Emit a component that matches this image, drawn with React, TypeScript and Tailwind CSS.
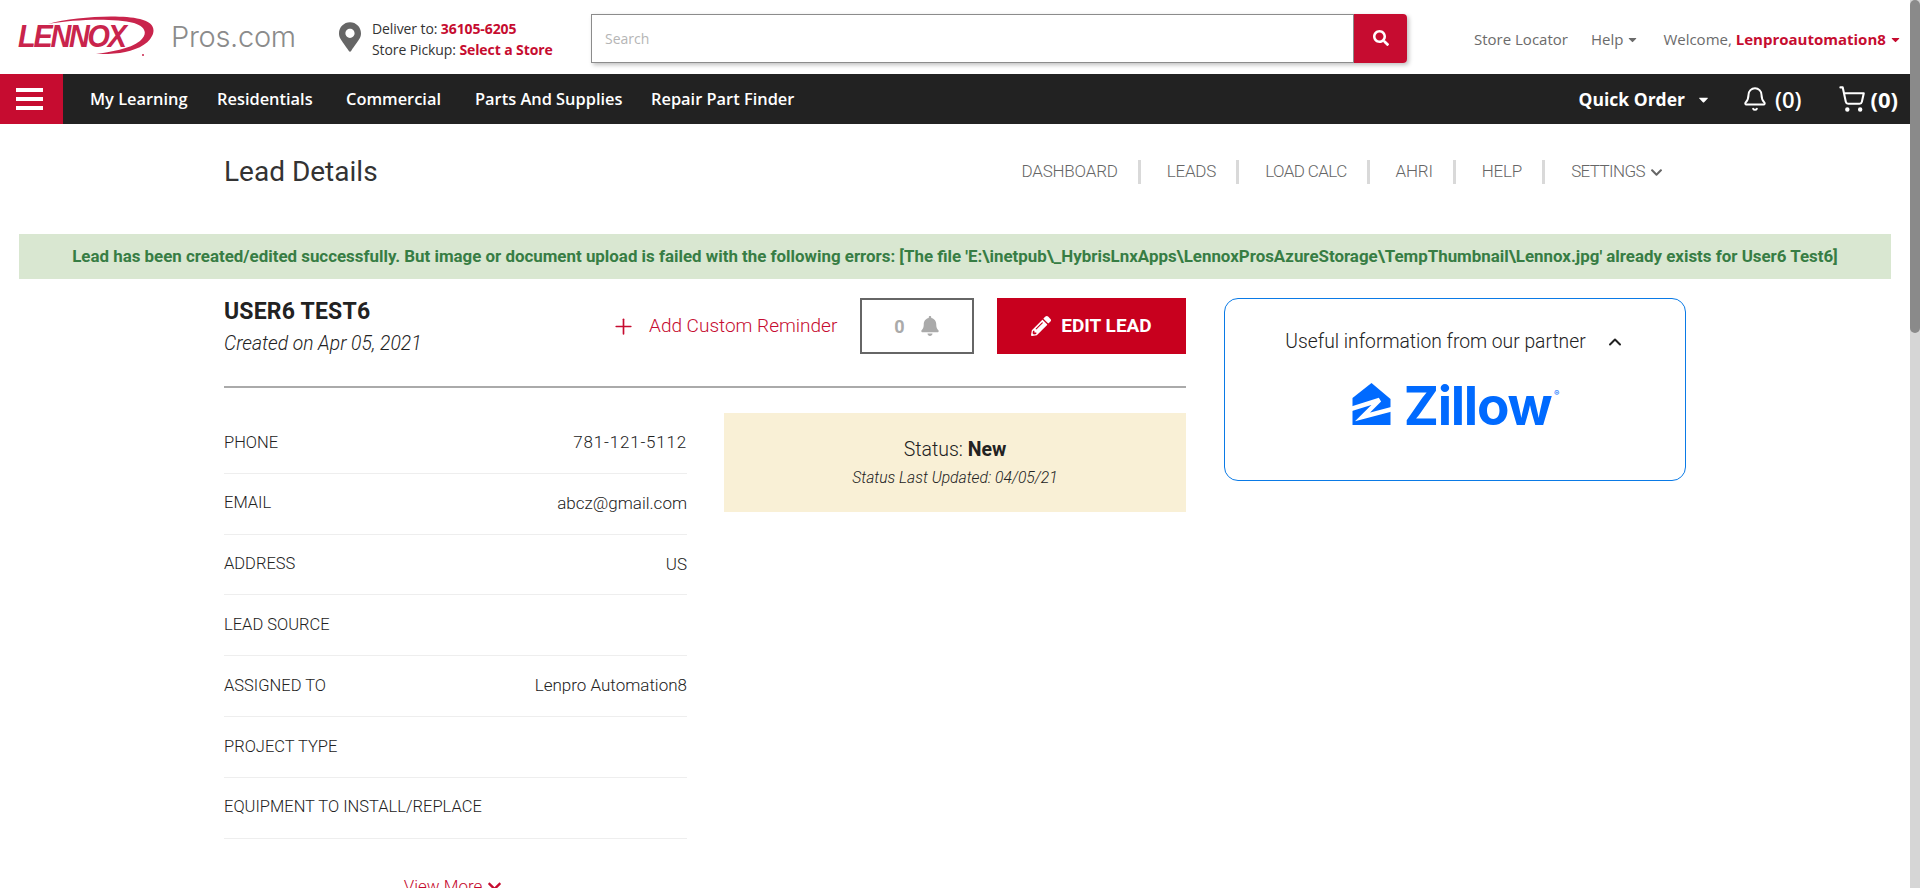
import { FaBell, FaChevronDown, FaMapMarkerAlt, FaPencilAlt, FaSearch, FaCaretDown } from "react-icons/fa";
import { Bell, ChevronUp, Plus, ShoppingCart } from "lucide-react";

const rows: [string, string][] = [
  ["PHONE", "781-121-5112"],
  ["EMAIL", "abcz@gmail.com"],
  ["ADDRESS", "US"],
  ["LEAD SOURCE", ""],
  ["ASSIGNED TO", "Lenpro Automation8"],
  ["PROJECT TYPE", ""],
  ["EQUIPMENT TO INSTALL/REPLACE", ""],
];

function LennoxLogo() {
  return (
    <div className="relative w-[143px] h-[42px] shrink-0">
      <svg viewBox="0 0 143 42" className="absolute inset-0 w-full h-full">
        <path d="M30 8 C55 1 100 -2 122 3 C134 6 138 12 134 20 C130 29 116 35 102 37 C94 38 86 38 78 38 C92 36 112 33 122 25 C130 18 128 11 116 7 C96 2 58 3 30 8 Z" fill="#c9244c" />
        <circle cx="125" cy="39" r="1" fill="#c9244c" />
      </svg>
      <span className="absolute left-0 top-[5px] font-['Liberation_Sans',sans-serif] font-bold italic text-[31px] leading-[32px] tracking-[-2.4px] text-[#c9244c] scale-x-[0.93] origin-left">LENNOX</span>
    </div>
  );
}

function ZillowLogo() {
  return (
    <div className="flex items-baseline gap-[13px] mr-[7px]">
      <svg viewBox="0 0 38 42" className="w-[39px] h-[42px] shrink-0">
        <path d="M19 0 L38 16 V42 H0 V15 Z" fill="#006AFF" />
        <path d="M-2 26 L27 17 L10 34 L40 26" fill="none" stroke="#ffffff" strokeWidth="4.5" strokeLinejoin="miter" />
      </svg>
      <span className="relative font-['Inter',sans-serif] font-bold text-[53px] leading-[42px] tracking-[-1.25px] text-[#006AFF]">
        Zillow
        <span className="absolute -right-[8px] top-[4px] text-[8px] leading-[8px] font-normal tracking-normal">®</span>
      </span>
    </div>
  );
}

function TopBar() {
  return (
    <div className="flex items-center h-[74px] pl-[18px] font-['Open_Sans',sans-serif]">
      <LennoxLogo />
      <span className="ml-[10px] w-[124px] font-['Inter',sans-serif] font-light text-[29px] tracking-[-0.3px] text-[#8b8b8b]">Pros.com</span>
      <FaMapMarkerAlt className="ml-[44px] text-[#666] w-[22px] h-[32px] shrink-0" />
      <div className="ml-[11px] w-[218px] mt-[4px] text-[14px] leading-[21px] text-[#333] tracking-[-0.1px]">
        <div>Deliver to: <span className="font-bold text-[#c60c30]">36105-6205</span></div>
        <div>Store Pickup: <span className="font-bold text-[#c60c30]">Select a Store</span></div>
      </div>
      <div className="flex mt-[2px] h-[49px] w-[816px] ml-[1px] shadow-[2px_2px_4px_rgba(0,0,0,0.25)] rounded-r-[4px]">
        <div className="flex-1 border border-[#8c8c8c] flex items-center pl-[13px] text-[14px] text-[#b5b5b5]">Search</div>
        <div className="w-[53px] bg-[#c60c30] rounded-r-[4px] flex items-center justify-center">
          <FaSearch className="text-white w-[16px] h-[16px]" />
        </div>
      </div>
      <div className="ml-[67px] flex items-center text-[15px] text-[#6b6b6b] pt-[5px] whitespace-nowrap">
        <span>Store Locator</span>
        <span className="ml-[23px] flex items-center gap-[3px]">Help <FaCaretDown className="w-[13px] h-[13px]" /></span>
        <span className="ml-[24px]">Welcome, <span className="font-bold text-[#c60c30]">Lenproautomation8</span></span>
        <FaCaretDown className="ml-[3px] w-[13px] h-[13px] text-[#c60c30]" />
      </div>
    </div>
  );
}

function NavBar() {
  return (
    <div className="flex items-center h-[50px] bg-[#222] text-white font-['Open_Sans',sans-serif] font-semibold text-[16.4px] whitespace-nowrap">
      <div className="w-[63px] h-full bg-[#c60c30] pr-[4px] flex flex-col items-center justify-center gap-[5px]">
        <span className="block w-[27px] h-[4px] bg-white" />
        <span className="block w-[27px] h-[4px] bg-white" />
        <span className="block w-[27px] h-[4px] bg-white" />
      </div>
      <span className="ml-[27px] w-[127px]">My Learning</span>
      <span className="w-[129px]">Residentials</span>
      <span className="w-[129px]">Commercial</span>
      <span className="w-[176px]">Parts And Supplies</span>
      <span>Repair Part Finder</span>
      <div className="flex-1" />
      <span className="text-[17.5px] font-bold">Quick Order</span>
      <FaCaretDown className="ml-[11px] w-[15px] h-[15px]" />
      <Bell className="ml-[31px] w-[26px] h-[26px]" strokeWidth={1.8} />
      <span className="ml-[7px] text-[22px] font-semibold">(0)</span>
      <ShoppingCart className="ml-[36px] w-[28px] h-[28px]" strokeWidth={1.8} />
      <span className="ml-[5px] mr-[12px] text-[22px] font-bold">(0)</span>
    </div>
  );
}

function SubNav() {
  const items = ["DASHBOARD", "LEADS", "LOAD CALC", "AHRI", "HELP"];
  return (
    <div className="flex items-center text-[17px] text-[#666] tracking-[-0.2px] whitespace-nowrap">
      {items.map((t) => (
        <div key={t} className="flex items-center">
          <span className={t === "LOAD CALC" ? "tracking-[-0.6px]" : "tracking-[-0.2px]"}>{t}</span>
          <span className="ml-[20px] mr-[26px] w-[3px] h-[24px] bg-[#d9d9d9]" />
        </div>
      ))}
      <span className="tracking-[-0.6px]">SETTINGS</span>
      <FaChevronDown className="ml-[5px] w-[13px] h-[13px]" />
    </div>
  );
}

function LeadInfo() {
  return (
    <div className="w-[962px]">
      <div className="flex items-start h-[90px] border-b-2 border-[#aaa]">
        <div className="w-[390px]">
          <div className="text-[23px] leading-[28px] font-bold text-[#222] tracking-[0.2px]">USER6 TEST6</div>
          <div className="mt-[6px] text-[19.3px] leading-[24px] italic text-[#222]">Created on Apr 05, 2021</div>
        </div>
        <div className="flex items-center h-[56px] text-[#c60c30] text-[19px]">
          <Plus className="-ml-[3px] w-[25px] h-[25px] mr-[13px]" strokeWidth={1.6} />
          <span className="w-[211px] whitespace-nowrap">Add Custom Reminder</span>
        </div>
        <div className="w-[114px] h-[56px] border-2 border-[#666] flex items-center justify-center gap-[15px] text-[#aaa] font-bold text-[18px]">
          <span>0</span>
          <FaBell className="w-[20px] h-[20px]" />
        </div>
        <div className="ml-[23px] w-[189px] h-[56px] bg-[#c8001e] text-white flex items-center justify-center gap-[10px] font-bold text-[19px]">
          <FaPencilAlt className="w-[20px] h-[20px]" />
          <span>EDIT LEAD</span>
        </div>
      </div>
      <div className="flex mt-[25px]">
        <div className="w-[463px]">
          {rows.map(([k, v]) => (
            <div key={k} className="flex items-center justify-between h-[60.8px] border-b border-[#eee] text-[#222]">
              <span className="text-[16.5px]">{k}</span>
              <span className={k === "PHONE" ? "text-[17px] tracking-[0.8px]" : "text-[17px]"}>{v}</span>
            </div>
          ))}
          <div className="mt-[35px] flex items-center justify-center gap-[5px] text-[17px] text-[#c60c30] pr-[5px]">
            <span>View More</span>
            <FaChevronDown className="w-[15px] h-[15px]" />
          </div>
        </div>
        <div className="ml-[37px] w-[462px] h-[99px] bg-[#f9f0d6] flex flex-col items-center justify-center pb-[1px] text-[#222]">
          <div className="text-[19.5px] leading-[26px]">Status: <span className="font-bold">New</span></div>
          <div className="mt-[6px] text-[15.7px] leading-[18px] italic">Status Last Updated: 04/05/21</div>
        </div>
      </div>
    </div>
  );
}

function PartnerCard() {
  return (
    <div className="ml-[38px] w-[462px] h-[183px] border border-[#0a7ae6] rounded-[14px] flex flex-col items-center pt-[30px]">
      <div className="flex items-center text-[19.3px] leading-[26px] text-[#222] whitespace-nowrap">
        <span>Useful information from our partner</span>
        <ChevronUp className="ml-[19px] w-[20px] h-[20px]" strokeWidth={2.4} />
      </div>
      <div className="mt-[28px]">
        <ZillowLogo />
      </div>
    </div>
  );
}

export default function App() {
  return (
    <div className="flex h-[888px] overflow-hidden bg-white">
      <div className="flex-1 min-w-0">
        <TopBar />
        <NavBar />
        <main className="font-['Roboto',sans-serif] font-light">
          <div className="flex items-center justify-between h-[96px] pl-[224px] pr-[247px]">
            <h1 className="text-[28px] font-normal text-[#333]">Lead Details</h1>
            <SubNav />
          </div>
          <div className="mx-[19px] mt-[14px] h-[45px] bg-[#d9e7d1] flex items-center justify-center font-bold text-[16.9px] text-[#377d44] whitespace-nowrap">
            Lead has been created/edited successfully. But image or document upload is failed with the following errors: [The file 'E:\inetpub\_HybrisLnxApps\LennoxProsAzureStorage\TempThumbnail\Lennox.jpg' already exists for User6 Test6]
          </div>
          <div className="flex pl-[224px] mt-[19px]">
            <LeadInfo />
            <PartnerCard />
          </div>
        </main>
      </div>
      <div className="w-[10px] shrink-0 bg-[#d6d6d6]">
        <div className="h-[333px] bg-[#8a8a8a] rounded-[5px]" />
      </div>
    </div>
  );
}
